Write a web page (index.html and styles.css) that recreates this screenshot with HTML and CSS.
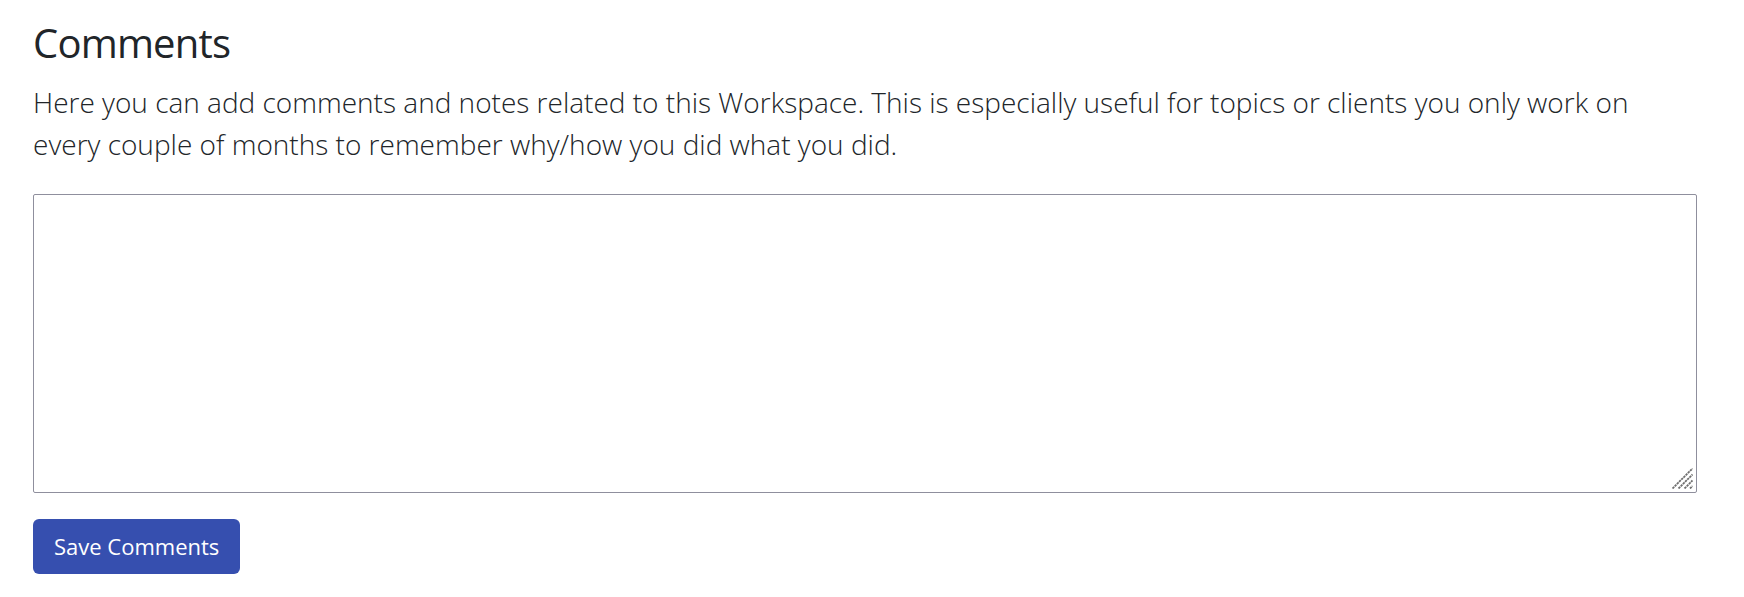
FILE: index.html
```html
<!DOCTYPE html>
<html lang="en">
<head>
    <meta charset="UTF-8">
    <title>Workspace Comments</title>
    <link rel="stylesheet" href="styles.css">
</head>
<body>

<div class="comments-section">
    <h2>Comments</h2>
    <p class="lead">Here you can add comments and notes related to this Workspace. This is especially useful for topics or clients you only work on every couple of months to remember why/how you did what you did.</p>

    <div class="comments-box">
        <textarea id="comments" class="comments-input"></textarea>
        <svg class="grip" width="21" height="21" viewBox="0 0 21 21">
            <path d="M0.5 20.5 L20.5 0.5 M6.5 20.5 L20.5 6.5 M12.5 20.5 L20.5 12.5 M18 20.5 L20.5 18" stroke="#6f6f6f" stroke-width="1.8" stroke-dasharray="2.4 0.7"/>
        </svg>
    </div>

    <button class="btn-save" onclick="saveComments()">Save Comments</button>
</div>

<script>
    function saveComments() {
        const text = document.getElementById('comments').value;
        localStorage.setItem('workspaceComments', text);
    }
</script>

</body>
</html>
```

FILE: styles.css
```css
body {
    font-family: 'Open Sans', 'Noto Sans', sans-serif;
    color: #212529;
    background: #fff;
    margin: 0;
}

.comments-section {
    padding: 16px 47px 0 33px;
}

h2 {
    font-size: 40px;
    font-weight: 400;
    letter-spacing: -0.8px;
    line-height: 54px;
    margin: 0 0 11px 0;
}

.lead {
    font-size: 28px;
    font-weight: 300;
    line-height: 42px;
    margin: 0 0 29px 0;
}

.comments-box {
    position: relative;
    height: 299px;
}

.comments-input {
    display: block;
    box-sizing: border-box;
    width: 100%;
    height: 100%;
    margin: 0;
    border: 1px solid #8f8f9d;
    border-radius: 2px;
    resize: none;
    font-family: inherit;
    font-size: 22px;
    padding: 4px;
}

.grip {
    position: absolute;
    right: 4px;
    bottom: 4px;
}

.btn-save {
    margin-top: 26px;
    background: #364faf;
    color: #fff;
    border: none;
    border-radius: 6px;
    font-family: inherit;
    font-size: 22px;
    line-height: 34px;
    padding: 10px 21px 11px;
    cursor: pointer;
}

.btn-save:hover {
    background: #2d4396;
}
```
